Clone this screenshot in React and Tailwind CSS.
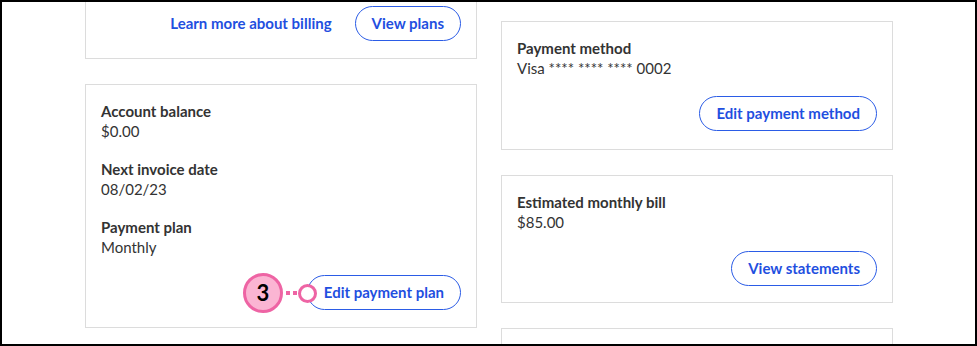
import React from "react";

function Field({ label, value }) {
  return (
    <div>
      <p className="font-bold text-[15px] leading-5 text-[#333]">{label}</p>
      <p className="text-[15px] leading-5 text-[#333]">{value}</p>
    </div>
  );
}

function OutlineButton({ children }) {
  return (
    <button className="h-[35px] px-4 rounded-full border border-[#2b5ce6] text-[#1f4fe0] text-[15px] font-bold bg-white">
      {children}
    </button>
  );
}

function Card({ children, className = "" }) {
  return <div className={"border border-[#dcdcdc] bg-white " + className}>{children}</div>;
}

export default function App() {
  return (
    <div
      className="relative w-[977px] h-[346px] overflow-hidden border-2 border-black bg-white"
      style={{ fontFamily: "Lato, 'Open Sans', sans-serif" }}
    >
      <div className="flex gap-6 pl-[83px]">
        {/* left column */}
        <div className="w-[392px] flex flex-col gap-[25px] -mt-[13px]">
          <Card className="pt-[16px] pb-[17px] pr-[15px] flex items-center justify-end gap-[23px]">
            <a className="text-[15px] font-bold text-[#1f4fe0]">Learn more about billing</a>
            <OutlineButton>View plans</OutlineButton>
          </Card>
          <Card className="pt-[16px] pb-[17px] pl-[15px] pr-[15px] flex flex-col">
            <div className="flex flex-col gap-[18px]">
              <Field label="Account balance" value="$0.00" />
              <Field label="Next invoice date" value="08/02/23" />
              <Field label="Payment plan" value="Monthly" />
            </div>
            <div className="flex justify-end mt-[18px]">
              <OutlineButton>Edit payment plan</OutlineButton>
            </div>
          </Card>
        </div>

        {/* right column */}
        <div className="w-[392px] flex flex-col gap-[25px] mt-[19px]">
          <Card className="pt-[16px] pb-[18px] px-[15px]">
            <Field label="Payment method" value="Visa **** **** **** 0002" />
            <div className="flex justify-end mt-[18px]">
              <OutlineButton>Edit payment method</OutlineButton>
            </div>
          </Card>
          <Card className="pt-[16px] pb-[16px] px-[15px]">
            <Field label="Estimated monthly bill" value="$85.00" />
            <div className="flex justify-end mt-[19px]">
              <OutlineButton>View statements</OutlineButton>
            </div>
          </Card>
          <Card className="h-[60px]" />
        </div>
      </div>

      {/* step annotation */}
      <div className="absolute left-[241px] top-[271px] flex items-center">
        <div className="w-[40px] h-[40px] rounded-full bg-[#fbb5d3] border-[3px] border-[#ee64a4] flex items-center justify-center text-[22px] font-bold text-black leading-none">
          3
        </div>
        <svg width="15" height="4">
          <line x1="0" y1="2" x2="15" y2="2" stroke="#ee64a4" strokeWidth="4" strokeDasharray="4 3" strokeDashoffset="4" />
        </svg>
        <div className="w-[19px] h-[19px] rounded-full bg-white border-[3px] border-[#ee64a4]" />
      </div>
    </div>
  );
}
